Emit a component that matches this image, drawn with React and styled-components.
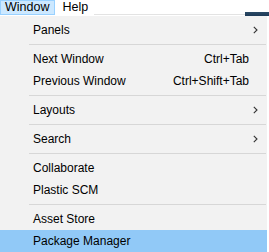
import React from 'react'
import styled, { createGlobalStyle } from 'styled-components'

const GlobalStyle = createGlobalStyle`
  html, body {
    margin: 0;
    padding: 0;
    background: #ffffff;
  }
  body {
    width: 269px;
    height: 252px;
    overflow: hidden;
    font-family: 'Liberation Sans', 'Noto Sans CJK KR', sans-serif;
    font-size: 12px;
    color: #000;
  }
`

const MenuBar = styled.div`
  display: flex;
  align-items: stretch;
  height: 16px;
  background: #ffffff;
`

const BarItem = styled.div`
  box-sizing: border-box;
  height: 15px;
  padding: 0 5px 0 4px;
  display: flex;
  align-items: center;
  line-height: 1;
  font-size: 12.5px;
  background: ${(p) => (p.active ? '#cce8ff' : 'transparent')};
  border: 1px solid ${(p) => (p.active ? '#99d1ff' : 'transparent')};
  margin-right: ${(p) => (p.active ? '2px' : '0')};
`

const BarRest = styled.div`
  flex: 1;
  display: flex;
  align-items: flex-end;
`

const BarLine = styled.div`
  flex: 1;
  height: 1px;
  background: #e3e3e3;
  margin-bottom: 1px;
`

const BehindWindow = styled.div`
  width: 24px;
  height: 4px;
  background: linear-gradient(#2b4a66, #1d3a57);
`

const Menu = styled.div`
  box-sizing: border-box;
  width: 267px;
  height: 236px;
  padding-top: 3px;
  background: #f2f2f2;
  overflow: hidden;
`

const Item = styled.div`
  display: flex;
  align-items: center;
  height: 22px;
  padding-left: 33px;
  padding-right: 9px;
  background: ${(p) => (p.selected ? '#91c9f7' : 'transparent')};
`

const Label = styled.span`
  flex: 1;
  white-space: nowrap;
  margin-top: -1px;
`

const Shortcut = styled.span`
  white-space: nowrap;
  margin-right: 9px;
  margin-top: -1px;
`

const Separator = styled.div`
  height: 7px;
  display: flex;
  align-items: center;
  padding-left: 29px;

  &::after {
    content: '';
    display: block;
    flex: 1;
    height: 1px;
    background: #d7d7d7;
    margin-right: 1px;
  }
`

const Chevron = () => (
  <svg width="5" height="8" viewBox="0 0 5 8">
    <path d="M0.8 0.8 L4 4 L0.8 7.2" fill="none" stroke="#333" strokeWidth="1.1" />
  </svg>
)

const entries = [
  { label: 'Panels', sub: true },
  '-',
  { label: 'Next Window', shortcut: 'Ctrl+Tab' },
  { label: 'Previous Window', shortcut: 'Ctrl+Shift+Tab' },
  '-',
  { label: 'Layouts', sub: true },
  '-',
  { label: 'Search', sub: true },
  '-',
  { label: 'Collaborate' },
  { label: 'Plastic SCM' },
  '-',
  { label: 'Asset Store' },
  { label: 'Package Manager', selected: true },
]

export default function App() {
  return (
    <>
      <GlobalStyle />
      <MenuBar>
        <BarItem active>Window</BarItem>
        <BarItem>Help</BarItem>
        <BarRest>
          <BarLine />
          <BehindWindow />
        </BarRest>
      </MenuBar>
      <Menu>
        {entries.map((e, i) =>
          e === '-' ? (
            <Separator key={i} />
          ) : (
            <Item key={i} selected={e.selected}>
              <Label>{e.label}</Label>
              {e.shortcut && <Shortcut>{e.shortcut}</Shortcut>}
              {e.sub && <Chevron />}
            </Item>
          )
        )}
      </Menu>
    </>
  )
}
